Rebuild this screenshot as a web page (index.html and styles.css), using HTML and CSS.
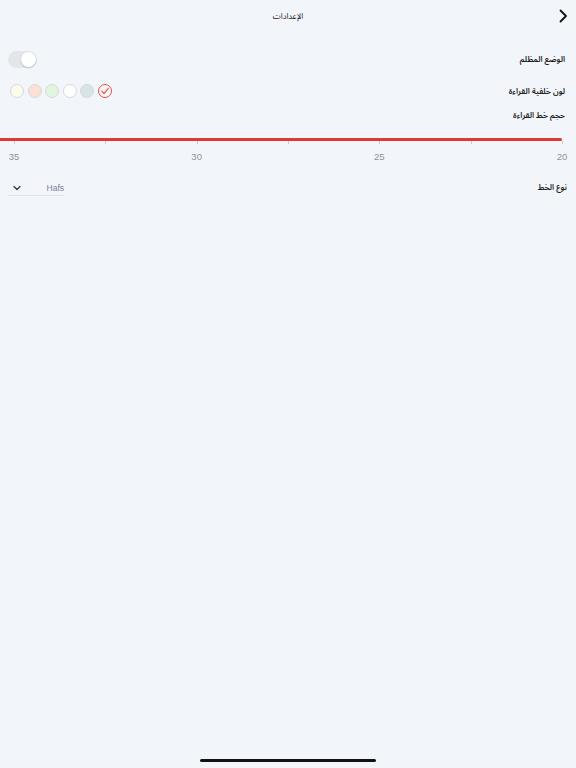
FILE: index.html
```html
<!DOCTYPE html>
<html lang="ar" dir="rtl">
<head>
<meta charset="utf-8">
<link rel="stylesheet" href="styles.css">
</head>
<body>
<div class="page">
  <header class="header">
    <span class="back">
      <svg width="10" height="14" viewBox="0 0 10 14"><path d="M2.5 1.5 L8 7 L2.5 12.5" fill="none" stroke="#111" stroke-width="1.8" stroke-linecap="round" stroke-linejoin="round"/></svg>
    </span>
    <span class="title">الإعدادات</span>
  </header>

  <div class="row row-dark">
    <span class="label">الوضع المظلم</span>
    <span class="toggle"><span class="knob"></span></span>
  </div>

  <div class="row row-colors">
    <span class="label">لون خلفية القراءة</span>
    <span class="swatches">
      <span class="swatch selected">
        <svg width="10" height="10" viewBox="0 0 10 10"><path d="M1.8 5.2 L4 7.6 L8.3 2.4" fill="none" stroke="#e0524e" stroke-width="1.1" stroke-linecap="round" stroke-linejoin="round"/></svg>
      </span>
      <span class="swatch c-blue"></span>
      <span class="swatch c-white"></span>
      <span class="swatch c-green"></span>
      <span class="swatch c-peach"></span>
      <span class="swatch c-cream"></span>
    </span>
  </div>

  <div class="row row-size">
    <span class="label">حجم خط القراءة</span>
  </div>

  <div class="slider" dir="ltr">
    <div class="track"></div>
    <div class="ticks">
      <span></span><span></span><span></span><span></span><span></span><span></span><span></span>
    </div>
    <div class="scale">
      <span>35</span><span>30</span><span>25</span><span>20</span>
    </div>
  </div>

  <div class="row row-font">
    <span class="label">نوع الخط</span>
    <span class="select" dir="ltr">
      <svg width="8" height="6" viewBox="0 0 8 6"><path d="M1 1.5 L4 4.5 L7 1.5" fill="none" stroke="#333" stroke-width="1.2" stroke-linecap="round" stroke-linejoin="round"/></svg>
      <span class="select-value">Hafs</span>
    </span>
  </div>

  <div class="spacer"></div>
  <div class="home"><span class="home-bar"></span></div>
</div>
</body>
</html>
```

FILE: styles.css
```css
html, body {
  margin: 0;
  padding: 0;
}
body {
  background: #f2f6fa;
  font-family: "Noto Sans Arabic", "Noto Naskh Arabic", "DejaVu Sans", sans-serif;
  color: #1a1a1a;
}
.page {
  width: 576px;
  height: 768px;
  display: flex;
  flex-direction: column;
}
.header {
  height: 32px;
  display: flex;
  align-items: center;
  justify-content: center;
  position: relative;
}
.title {
  font-size: 8px;
  color: #222;
}
.back {
  position: absolute;
  right: 8px;
  top: 9px;
  display: flex;
}
.row {
  display: flex;
  align-items: center;
  justify-content: space-between;
  padding: 0 11px 0 8px;
}
.label {
  font-size: 8px;
  font-weight: 600;
  color: #1a1a1a;
}
.row-dark {
  height: 30px;
  margin-top: 12px;
}
.toggle {
  width: 29px;
  height: 17px;
  border-radius: 9px;
  background: #e3e5e9;
  display: flex;
  align-items: center;
  justify-content: flex-start;
  padding: 0 1px;
  box-sizing: border-box;
}
.knob {
  width: 15px;
  height: 15px;
  border-radius: 50%;
  background: #ffffff;
  box-shadow: 0 1px 2px rgba(0,0,0,0.2);
}
.row-colors {
  height: 34px;
  padding-left: 10px;
}
.swatches {
  display: flex;
  gap: 3.5px;
}
.swatch {
  width: 14px;
  height: 14px;
  border-radius: 50%;
  border: 1px solid #d6d9dc;
  box-sizing: border-box;
  display: flex;
  align-items: center;
  justify-content: center;
}
.swatch.selected {
  border-color: #e0524e;
  background: #f7f4f4;
}
.c-blue { background: #d7e5e9; }
.c-white { background: #ffffff; }
.c-green { background: #e2f5dd; }
.c-peach { background: #fcdfd5; }
.c-cream { background: #fdfbe9; }
.row-size {
  height: 14px;
  padding-right: 11px;
}
.slider {
  margin-top: 16px;
  height: 34px;
  display: flex;
  flex-direction: column;
}
.track {
  width: 562px;
  height: 3px;
  background: #e03a30;
  border-radius: 0 2px 2px 0;
}
.ticks {
  width: 549px;
  margin-left: 14px;
  height: 4px;
  display: flex;
  justify-content: space-between;
}
.ticks span {
  width: 1px;
  height: 3px;
  background: #c5c9ce;
}
.scale {
  width: 568px;
  margin-left: 4px;
  margin-top: 6px;
  display: flex;
  justify-content: space-between;
}
.scale span {
  width: 20px;
  text-align: center;
  font-size: 9.5px;
  color: #8c939c;
  font-family: "Liberation Sans", "DejaVu Sans", sans-serif;
}
.row-font {
  height: 22px;
  margin-top: 4px;
  padding-right: 9px;
}
.select {
  width: 56px;
  height: 16px;
  display: flex;
  align-items: center;
  justify-content: space-between;
  border-bottom: 1px solid #e2e5e9;
  box-sizing: border-box;
  padding-left: 5px;
  margin-top: 2px;
}
.select-value {
  font-size: 8.5px;
  color: #7d7f9e;
  font-family: "Liberation Sans", "DejaVu Sans", sans-serif;
}
.spacer {
  flex: 1;
}
.home {
  height: 9px;
  display: flex;
  justify-content: center;
}
.home-bar {
  width: 176px;
  height: 3px;
  border-radius: 2px;
  background: #111;
}
```
